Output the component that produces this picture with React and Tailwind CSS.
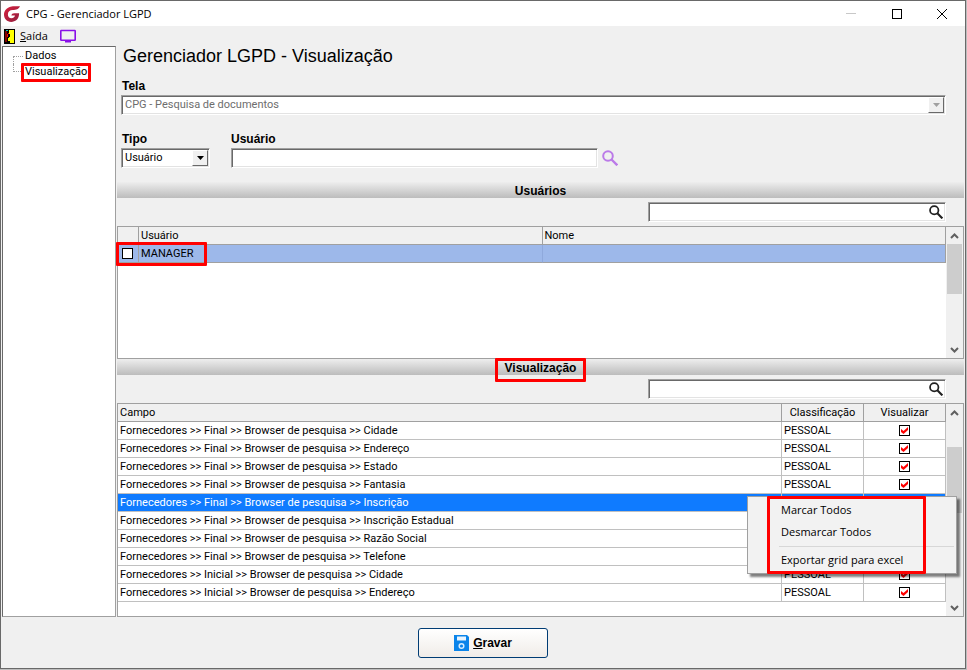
import React, { useState } from 'react';

const USERS = [{ login: 'MANAGER', nome: '' }];

const FIELDS = [
  'Fornecedores >> Final >> Browser de pesquisa >> Cidade',
  'Fornecedores >> Final >> Browser de pesquisa >> Endereço',
  'Fornecedores >> Final >> Browser de pesquisa >> Estado',
  'Fornecedores >> Final >> Browser de pesquisa >> Fantasia',
  'Fornecedores >> Final >> Browser de pesquisa >> Inscrição',
  'Fornecedores >> Final >> Browser de pesquisa >> Inscrição Estadual',
  'Fornecedores >> Final >> Browser de pesquisa >> Razão Social',
  'Fornecedores >> Final >> Browser de pesquisa >> Telefone',
  'Fornecedores >> Inicial >> Browser de pesquisa >> Cidade',
  'Fornecedores >> Inicial >> Browser de pesquisa >> Endereço',
];

const SUNKEN =
  'border border-t-[#a0a0a0] border-l-[#a0a0a0] border-r-white border-b-white bg-white shadow-[inset_1px_1px_0_#696969,inset_-1px_-1px_0_#e3e3e3]';

const BOLD = "font-['Liberation_Sans',Arial,sans-serif] text-xs leading-4 font-bold";

// Red marker drawn around the part it is nested in
function Marker({ className }) {
  return <span className={`pointer-events-none absolute rounded-[1px] border-3 border-[#ff0000] ${className}`} />;
}

function MagnifierIcon({ className }) {
  return (
    <svg viewBox="0 0 16 16" className={className} fill="none" stroke="currentColor" strokeWidth="2" aria-hidden="true">
      <circle cx="6" cy="6" r="4.8" />
      <path d="M9.500 9.500 15.300 15.300" strokeWidth="2.400" />
    </svg>
  );
}

function Chevron({ up }) {
  return (
    <svg viewBox="0 0 9 6" className="h-1.5 w-[9px]" fill="none" stroke="#606060" strokeWidth="2" aria-hidden="true">
      <path d={up ? 'M1 5 4.5 1.5 8 5' : 'M1 1 4.5 4.5 8 1'} />
    </svg>
  );
}

function ScrollBar({ thumb }) {
  return (
    <div className="flex w-[17px] shrink-0 flex-col bg-[#f0f0f0] px-px">
      <button type="button" aria-label="Rolar para cima" className="flex h-[17px] items-center justify-center">
        <Chevron up />
      </button>
      <div className="flex-1">
        <div className={`bg-[#cdcdcd] ${thumb}`} />
      </div>
      <button type="button" aria-label="Rolar para baixo" className="flex h-[17px] items-center justify-center">
        <Chevron />
      </button>
    </div>
  );
}

function TitleBar() {
  return (
    <header className="flex h-[25px] shrink-0 items-center bg-white pl-[3px]">
      <svg viewBox="0 0 16 16" className="h-4 w-4" aria-hidden="true">
        <defs>
          <linearGradient id="logo" x1="0" y1="0" x2="1" y2="1">
            <stop offset="0" stopColor="#d81f3c" />
            <stop offset="1" stopColor="#8f2040" />
          </linearGradient>
        </defs>
        <path
          fill="url(#logo)"
          d="M16 0.3C13 .2 9 0 6.500 .7C2.500 1.800 0 4.700 0 8.600C0 13 3 15.900 7.200 15.900C11.500 15.900 14.600 13.300 15 8.800L15.100 7.200H10.200C8.600 7.200 7.700 8 7.400 9.600H11C10.500 11.300 9.200 12.300 7.500 12.300C5.200 12.300 3.900 10.800 3.900 8.500C3.900 5.800 5.700 4.200 8.800 4.100C12 4 14.800 3.300 16 .3Z"
        />
      </svg>
      <h1 className="ml-1.5 font-['Open_Sans',sans-serif] text-[11px] text-black">CPG - Gerenciador LGPD</h1>
      <div className="ml-auto flex h-full">
        <button type="button" aria-label="Minimizar" className="flex w-[46px] items-center justify-center">
          <span className="h-px w-2.5 bg-[#c8c8c8]" />
        </button>
        <button type="button" aria-label="Maximizar" className="flex w-[45px] items-center justify-center">
          <span className="h-2.5 w-2.5 border border-black" />
        </button>
        <button type="button" aria-label="Fechar" className="flex w-[46px] items-center justify-center">
          <svg viewBox="0 0 10 10" className="h-2.5 w-2.5" stroke="#000" aria-hidden="true">
            <path d="M0 0 10 10M10 0 0 10" />
          </svg>
        </button>
      </div>
    </header>
  );
}

function ToolBar() {
  return (
    <div className="flex h-5 shrink-0 items-center pl-[3px]">
      <button type="button" className="flex items-center gap-[5px] font-['Open_Sans',sans-serif] text-[11px]">
        <svg viewBox="0 0 11 15" className="h-[15px] w-[11px]" shapeRendering="crispEdges" aria-hidden="true">
          <path fill="#000" d="M0 0H11V15H0Z" />
          <path fill="#ff0" d="M5 1H10V14H5Z" />
          <path fill="#800000" d="M1 2H3V13H1Z" />
          <path fill="#000" d="M5 5H6V8H5ZM5 12H6V14H5Z" />
          <path fill="#f00" d="M3 5H4V8H3ZM4 4H5V5H4Z" />
          <path fill="#00c8c8" d="M2 1H4V2H2Z" />
          <path fill="#ff0" d="M4 9H5V12H4Z" />
        </svg>
        <span><u>S</u>aída</span>
      </button>
      <button type="button" aria-label="Tela" className="ml-3">
        <svg viewBox="0 0 16 14" className="h-3.5 w-4" fill="none" stroke="#8a10e8" strokeWidth="1.6" aria-hidden="true">
          <rect x="0.8" y="1.5" width="14.4" height="9.700" rx="0.5" />
          <path d="M5 12.500H11" strokeWidth="2" />
        </svg>
      </button>
    </div>
  );
}

function Tree() {
  return (
    <nav className="w-[114px] shrink-0 border border-[#a0a0a0] border-t-[#696969] border-l-[#696969] bg-white pt-px">
      <ul className="ml-2.5">
        <li className="flex h-4">
          <span className="mt-2 h-2 w-2.5 border-t border-l border-dotted border-[#a0a0a0]" />
          <a href="#dados" className="ml-0.5">Dados</a>
        </li>
        <li className="flex h-4">
          <span className="h-2 w-2.5 border-b border-l border-dotted border-[#a0a0a0]" />
          <a href="#visualizacao" className="relative ml-0.5">
            Visualização
            <Marker className="-inset-x-1 -top-px -bottom-0.5" />
          </a>
        </li>
      </ul>
    </nav>
  );
}

function Section({ title, marked, label }) {
  return (
    <>
      <div className="flex h-4 shrink-0 items-center justify-center bg-linear-to-b from-[#eeeeee] to-[#bcbcbc]">
        <h3 className={`relative pt-px ${BOLD}`}>
          {title}
          {marked && <Marker className="-inset-x-2.5 -top-px -bottom-1.5" />}
        </h3>
      </div>
      <div className="flex h-7 shrink-0 items-center justify-end pr-[18px]">
        <div className={`flex h-5 w-[298px] items-center ${SUNKEN}`}>
          <input aria-label={label} className="min-w-0 flex-1 px-1 outline-none" />
          <MagnifierIcon className="mr-0.5 h-3.5 w-3.5 text-[#202020]" />
        </div>
      </div>
    </>
  );
}

function UsersGrid() {
  const th = 'border-r border-b border-[#a0a0a0] px-0.5 text-left font-normal';
  return (
    <div className="relative flex h-[133px] shrink-0 border border-[#a0a0a0] bg-white">
      <div className="min-w-0 flex-1">
        <table className="w-full table-fixed border-separate border-spacing-0">
          <colgroup>
            <col className="w-[21px]" />
            <col />
            <col />
          </colgroup>
          <thead>
            <tr className="h-[18px] bg-[#f0f0f0]">
              <th className={th} />
              <th className={th}>Usuário</th>
              <th className={th}>Nome</th>
            </tr>
          </thead>
          <tbody>
            {USERS.map((u) => (
              <tr key={u.login} className="h-[18px] bg-[#9db8ea]">
                <td className="border-r border-b border-[#a0a0a0] pl-1">
                  <input
                    type="checkbox"
                    aria-label={`Selecionar ${u.login}`}
                    className="block h-[11px] w-[11px] appearance-none border border-black bg-white"
                  />
                </td>
                <td className="border-r border-b border-r-[#8fa9dc] border-b-[#a0a0a0] px-0.5">{u.login}</td>
                <td className="border-r border-b border-[#a0a0a0] px-0.5">{u.nome}</td>
              </tr>
            ))}
          </tbody>
        </table>
      </div>
      <ScrollBar thumb="h-[50px]" />
      <Marker className="top-[15px] -left-0.5 h-6 w-[91px]" />
    </div>
  );
}

function ContextMenu() {
  const item = 'block h-[22px] w-full pl-[33px] text-left';
  return (
    <div
      role="menu"
      className="absolute top-[92px] right-1.5 w-[210px] border border-[#a0a0a0] bg-[#f2f2f2] pt-0.5 pb-0.5 font-['Open_Sans',sans-serif] text-[11px] shadow-[3px_3px_2px_rgba(0,0,0,0.5)]"
    >
      <button type="button" role="menuitem" className={item}>Marcar Todos</button>
      <button type="button" role="menuitem" className={item}>Desmarcar Todos</button>
      <hr className="mt-[3px] mr-0.5 mb-0.5 ml-[31px] border-[#d7d7d7]" />
      <button type="button" role="menuitem" className={item}>Exportar grid para excel</button>
      <Marker className="-inset-y-px right-[30px] left-[19px]" />
    </div>
  );
}

function FieldsGrid() {
  const [selected, setSelected] = useState(4);
  const [checked, setChecked] = useState(FIELDS.map(() => true));

  const toggle = (i) => setChecked((p) => p.map((v, n) => (n === i ? !v : v)));

  const th = 'border-r border-b border-[#a0a0a0] px-0.5 font-normal';
  const td = 'border-r border-b border-[#c0c0c0] px-0.5';

  return (
    <div className="relative flex min-h-[213px] flex-1 border border-[#a0a0a0] bg-white">
      <div className="min-w-0 flex-1">
        <table className="w-full table-fixed border-separate border-spacing-0">
          <colgroup>
            <col />
            <col className="w-[82px]" />
            <col className="w-[82px]" />
          </colgroup>
          <thead>
            <tr className="h-[18px] bg-[#f0f0f0]">
              <th className={`${th} text-left`}>Campo</th>
              <th className={th}>Classificação</th>
              <th className={th}>Visualizar</th>
            </tr>
          </thead>
          <tbody>
            {FIELDS.map((campo, i) => (
              <tr
                key={campo}
                onClick={() => setSelected(i)}
                className={`h-[18px] ${i === selected ? 'bg-[#0f7bff] text-white' : 'bg-white'}`}
              >
                <td className={td}>{campo}</td>
                <td className={td}>PESSOAL</td>
                <td className={td}>
                  <label className="relative mx-auto block h-[11px] w-[11px]">
                    <input
                      type="checkbox"
                      aria-label={`Visualizar ${campo}`}
                      checked={checked[i]}
                      onChange={() => toggle(i)}
                      className="block h-[11px] w-[11px] appearance-none border border-black bg-white"
                    />
                    {checked[i] && (
                      <svg viewBox="0 0 11 11" className="pointer-events-none absolute inset-0" fill="#f00" aria-hidden="true">
                        <path d="M2 4 4.500 6 9 2V5L4.500 9 2 7Z" />
                      </svg>
                    )}
                  </label>
                </td>
              </tr>
            ))}
          </tbody>
        </table>
      </div>
      <ScrollBar thumb="mt-[26px] h-[66px]" />
      <ContextMenu />
    </div>
  );
}

function DropButton({ disabled }) {
  return (
    <span className="pointer-events-none absolute top-0.5 right-0.5 flex h-4 w-4 items-center justify-center border border-t-white border-r-[#696969] border-b-[#696969] border-l-white bg-[#f0f0f0]">
      <svg viewBox="0 0 7 4" className="h-1 w-[7px]" aria-hidden="true">
        <path d="M0 0H7L3.500 4Z" fill={disabled ? '#a0a0a0' : '#000'} />
      </svg>
    </span>
  );
}

function Filters() {
  return (
    <div className="shrink-0 pb-3.5 pl-1">
      <h2 className="pl-0.5 font-['Liberation_Sans',Arial,sans-serif] text-[18px] leading-5">
        Gerenciador LGPD - Visualização
      </h2>
      <label htmlFor="tela" className={`mt-3 block pl-px ${BOLD}`}>Tela</label>
      <div className="relative mt-px mr-[18px]">
        <select id="tela" disabled className={`block h-5 w-full appearance-none pl-[3px] text-[#6d6d6d] opacity-100 ${SUNKEN}`}>
          <option>CPG - Pesquisa de documentos</option>
        </select>
        <DropButton disabled />
      </div>
      <div className="mt-4 flex">
        <div className="w-[110px]">
          <label htmlFor="tipo" className={`block pl-px ${BOLD}`}>Tipo</label>
          <div className="relative mt-px w-[89px]">
            <select id="tipo" className={`block h-5 w-full appearance-none pl-[3px] ${SUNKEN}`}>
              <option>Usuário</option>
            </select>
            <DropButton />
          </div>
        </div>
        <div className="flex-1">
          <label htmlFor="usuario" className={`block ${BOLD}`}>Usuário</label>
          <div className="mt-px flex items-center gap-1">
            <input id="usuario" className={`h-5 w-1/2 px-1 outline-none ${SUNKEN}`} />
            <button type="button" aria-label="Pesquisar usuário">
              <MagnifierIcon className="h-4 w-4 text-[#bb7ae8]" />
            </button>
          </div>
        </div>
      </div>
    </div>
  );
}

export default function App() {
  return (
    <div className="h-screen min-h-[640px] bg-[#bdbdbd] pr-px pb-px font-[Roboto,'Liberation_Sans',sans-serif] text-[11px] leading-4 text-black">
      <div className="flex h-full flex-col border border-[#696969] bg-[#f0f0f0]">
        <TitleBar />
        <ToolBar />
        <div className="flex min-h-0 flex-1 gap-px px-px">
          <Tree />
          <main className="flex min-w-0 flex-1 flex-col">
            <Filters />
            <Section title="Usuários" label="Pesquisar usuários" />
            <UsersGrid />
            <Section title="Visualização" label="Pesquisar campos" marked />
            <FieldsGrid />
          </main>
        </div>
        <footer className="flex h-[51px] shrink-0 items-center justify-center">
          <button
            type="button"
            className={`flex h-[30px] w-[130px] items-center justify-center gap-1 rounded-[3px] border border-[#003c74] bg-linear-to-b from-white to-[#f0ece8] ${BOLD}`}
          >
            <svg viewBox="0 0 15 16" className="h-4 w-[15px]" aria-hidden="true">
              <path fill="#0a84ea" d="M0 0H13L15 2V16H0Z" />
              <path fill="#e8f4ff" d="M3 1.500H12V5.500H3Z" />
              <circle cx="7.500" cy="11" r="2.300" fill="none" stroke="#d5ecff" strokeWidth="1.500" />
            </svg>
            <span><u>G</u>ravar</span>
          </button>
        </footer>
      </div>
    </div>
  );
}
